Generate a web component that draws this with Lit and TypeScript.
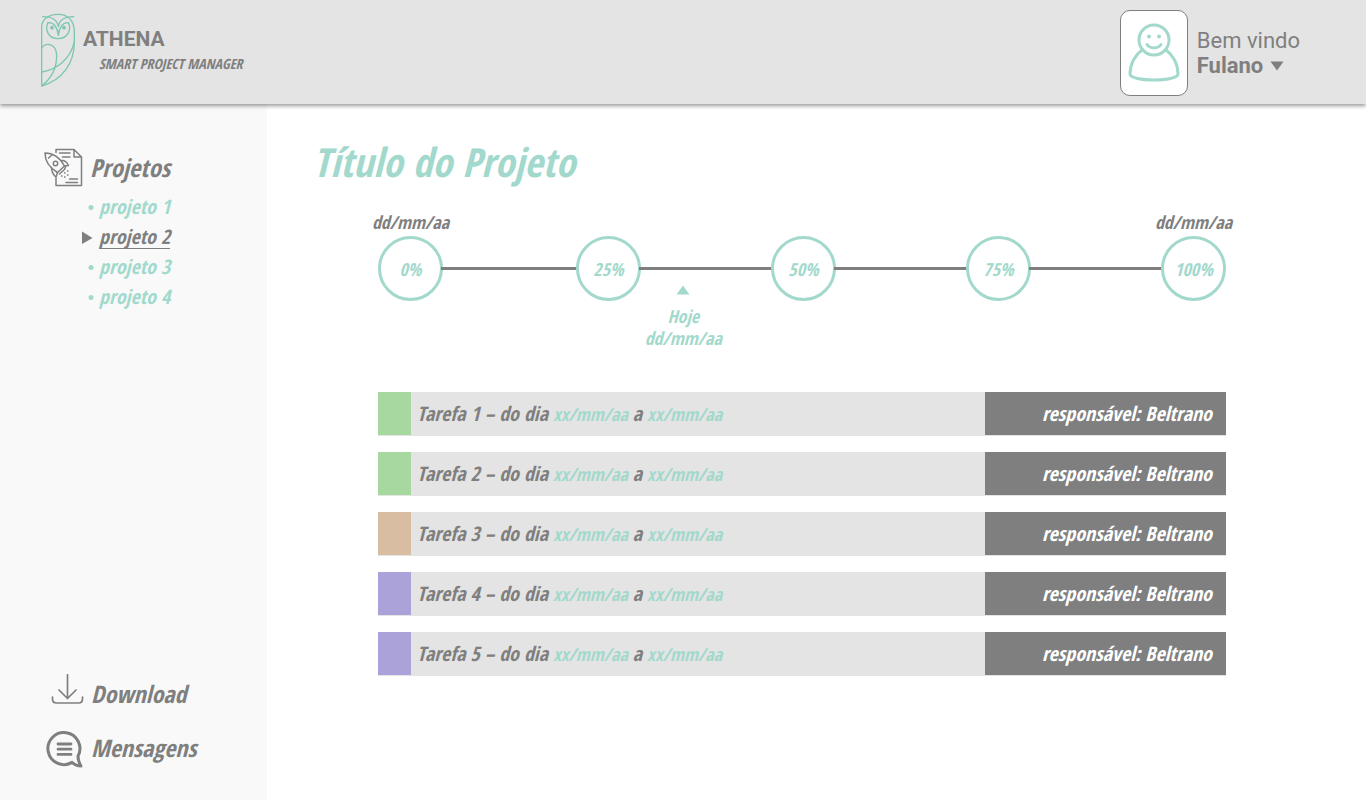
import { LitElement, html, css, svg } from "lit";
import { customElement, property, state } from "lit/decorators.js";
import { classMap } from "lit/directives/class-map.js";
import { styleMap } from "lit/directives/style-map.js";

interface Task {
  id: number;
  tone: string;
  start: string;
  end: string;
  owner: string;
}

const owl = html`<svg class="owl" viewBox="30 39 108 225" aria-hidden="true">
  <g fill="none" stroke="#7cc7b2" stroke-width="4" stroke-linecap="round" stroke-linejoin="round">
    <path d="M35 258V82C35 58 56 43 84 43s49 17 49 52v30C133 190 98 240 35 258z" />
    <path d="M38 50C62 50 82 58 85 80C88 58 108 50 131 50" />
    <path d="M54 68C44 88 54 116 84 116S125 88 115 68" />
    <path d="M54 68C72 66 83 84 85 106C87 84 98 66 115 68" />
    <path d="M35 145C45 126 80 128 80 168C80 205 62 236 37 256" />
    <path d="M36 216C82 208 122 176 133 125" />
  </g>
  <circle cx="66" cy="83" r="5.500" fill="#7cc7b2" />
  <circle cx="102" cy="83" r="5.500" fill="#7cc7b2" />
</svg>`;

const person = html`<svg class="person" viewBox="0 0 52 60" aria-hidden="true">
  <g fill="none" stroke="#a2d9cc" stroke-width="3" stroke-linecap="round" stroke-linejoin="round">
    <circle cx="26" cy="17" r="15" />
    <path d="M14 27C7 32 2 41 2 51c0 4 12 6 24 6s24-2 24-6c0-10-5-19-12-24" />
    <path d="M19 21.500c3 4.500 11 4.500 14 0" />
  </g>
  <circle cx="21" cy="13.500" r="2" fill="#a2d9cc" />
  <circle cx="31" cy="13.500" r="2" fill="#a2d9cc" />
</svg>`;

const rocket = html`<svg class="glyph" viewBox="0 0 40 40" aria-hidden="true">
  <g fill="none" stroke="#7f7f7f" stroke-width="1.500" stroke-linejoin="round" stroke-linecap="round">
    <path d="M12 5.500V2.500H30L37.500 10V38.500H12V31M30 2.500V10H37.500" />
    <path d="M15.500 6H26M18.500 10H26M25.500 32H33.500M22 35.500H33.500" />
    <path d="M1 6C9 6 16 11 20.500 19L13.500 25.500C6 21 1 14 1 6z" />
    <path d="M4.500 11L8.500 7.500M17 13.500C20 13 23 15 24.500 18.500L20.500 19M7.500 20.500C7.500 25 9.500 28 12 30L13.500 25.500" />
    <path d="M21.500 20L20.500 22.500L15.500 27" />
    <circle cx="11.500" cy="16.500" r="2.200" />
  </g>
  <path d="M17 29h1.500M20 26h1.500M23 24h1.500M20 30h1.500M23 28h1.500" stroke="#7f7f7f" stroke-width="1.500" />
</svg>`;

const download = html`<svg class="glyph" viewBox="0 0 40 40" aria-hidden="true">
  <path d="M23.500 0.800V24.500M15 16L23.500 24.500L32 16M8.500 23V25Q8.500 29 12.500 29H34.500Q38.500 29 38.500 25V23"
    fill="none" stroke="#7f7f7f" stroke-width="1.700" stroke-linecap="round" stroke-linejoin="round" />
</svg>`;

const messages = html`<svg class="glyph" viewBox="0 0 40 40" aria-hidden="true">
  <path d="M34 28.200A16 16 0 1 0 28 34.400Q32 38 37 38Q34 33.500 34 28.200z"
    fill="none" stroke="#7f7f7f" stroke-width="3" stroke-linejoin="round" />
  <path d="M14 16H27M14 21.200H27M14 26.400H27" stroke="#7f7f7f" stroke-width="2.800" stroke-linecap="round" />
</svg>`;

@customElement("project-timeline")
export class ProjectTimeline extends LitElement {
  @property({ type: Number }) progress = 0;

  static styles = css`
    :host { display: block; font-size: 18px; }
    .ends { display: flex; justify-content: space-between; margin-bottom: 3px; color: #7f7f7f; }
    .end { display: flex; justify-content: center; width: 65px; white-space: nowrap; }
    .track {
      display: grid;
      grid-template-columns: auto 133fr auto 130fr auto 130fr auto 130fr auto;
      align-items: center;
      color: #a2d9cc;
    }
    .stop {
      box-sizing: border-box;
      display: grid;
      place-items: center;
      width: 65px;
      height: 65px;
      border: 3px solid #a2d9cc;
      border-radius: 50%;
    }
    .line { height: 3px; margin: 0 -2px; background: #7f7f7f; }
    .today { display: flex; flex-direction: column; align-items: center; color: #a2d9cc; margin-top: -16px; }
    .arrow { width: 14px; height: 10px; margin-bottom: 10px; }
  `;

  render() {
    const stops = [0, 25, 50, 75, 100];
    return html`
      <div class="ends"><span class="end">dd/mm/aa</span><span class="end">dd/mm/aa</span></div>
      <div class="track">
        ${stops.map((s, i) => html`${i ? html`<span class="line"></span>` : ""}<span class="stop">${s}%</span>`)}
      </div>
      <div class="today" style=${styleMap({ width: `${this.progress * 2}%` })}>
        <svg class="arrow" viewBox="0 0 14 10" aria-hidden="true"><path d="M7 0.500L13.500 9.500H0.500z" fill="#a2d9cc" /></svg>
        <span>Hoje</span><span>dd/mm/aa</span>
      </div>
    `;
  }
}

@customElement("app-root")
export class AppRoot extends LitElement {
  @state() private current = 2;

  private tasks: Task[] = [
    { id: 1, tone: "green", start: "xx/mm/aa", end: "xx/mm/aa", owner: "Beltrano" },
    { id: 2, tone: "green", start: "xx/mm/aa", end: "xx/mm/aa", owner: "Beltrano" },
    { id: 3, tone: "sand", start: "xx/mm/aa", end: "xx/mm/aa", owner: "Beltrano" },
    { id: 4, tone: "violet", start: "xx/mm/aa", end: "xx/mm/aa", owner: "Beltrano" },
    { id: 5, tone: "violet", start: "xx/mm/aa", end: "xx/mm/aa", owner: "Beltrano" },
  ];

  static styles = css`
    :host {
      display: flex;
      flex-direction: column;
      min-height: 100vh;
      background: #fff;
      color: #7f7f7f;
      font: italic bold 20px/22px "Liberation Sans Narrow", "Open Sans Condensed", "Noto Sans", sans-serif;
    }
    a { color: inherit; text-decoration: none; }
    ul { list-style: none; margin: 0; padding: 0; }
    .top {
      position: relative;
      display: flex;
      justify-content: space-between;
      align-items: center;
      box-sizing: border-box;
      min-height: 104px;
      padding: 2px 66px 0 40px;
      background: #e4e4e4;
      box-shadow: 0 2px 4px rgba(0, 0, 0, 0.4);
    }
    .brand { display: flex; align-items: center; gap: 7px; padding-bottom: 5px; }
    .owl { width: 36px; height: 75px; }
    .name { font: bold 21px/26px Roboto, sans-serif; }
    .tagline { padding-left: 16px; font-size: 14px; line-height: 24px; }
    .user { display: flex; align-items: center; gap: 9px; }
    .avatar {
      box-sizing: border-box;
      display: grid;
      place-items: center;
      width: 68px;
      height: 86px;
      border: 1px solid #7f7f7f;
      border-radius: 10px;
      background: #fff;
    }
    .person { width: 52px; height: 60px; }
    .welcome { font: 22px/25px Roboto, sans-serif; }
    .account {
      display: flex;
      align-items: center;
      gap: 7px;
      padding: 0;
      border: 0;
      background: none;
      color: inherit;
      font: bold 22px/25px Roboto, sans-serif;
    }
    .caret { width: 14px; height: 10px; }
    .body { flex: 1; display: flex; }
    .side {
      box-sizing: border-box;
      flex: none;
      display: flex;
      flex-direction: column;
      justify-content: space-between;
      width: 267px;
      padding: 43px 20px 32px 44px;
      background: #f9f9f9;
    }
    .entry { display: flex; align-items: center; gap: 6px; font-size: 25px; line-height: 40px; }
    .glyph { width: 40px; height: 40px; }
    .projects { padding: 5px 0 0 38px; color: #a2d9cc; }
    .project { display: flex; align-items: center; gap: 5px; min-height: 30px; }
    .mark { width: 12px; height: 14px; }
    .label { border-bottom: 1px solid transparent; }
    .current { color: #7f7f7f; }
    .current .label { border-color: #7f7f7f; }
    .tools { display: flex; flex-direction: column; gap: 14px; }
    .tools .entry { gap: 7px; font-size: 24px; }
    .main { flex: 1; padding: 34px 140px 40px 46px; }
    .title { margin: 0; color: #a2d9cc; font-size: 40px; line-height: 48px; }
    .board { padding: 25px 0 0 65px; }
    .tasks { display: flex; flex-direction: column; gap: 16px; margin-top: 43px; }
    .task { display: flex; line-height: 43px; border-bottom: 1px solid #e4e4e4; background: #e4e4e4; }
    .tone { width: 33px; }
    .green { background: #a6d8a0; }
    .sand { background: #d8bda2; }
    .violet { background: #aaa2d8; }
    .what { flex: 1; padding-left: 6px; }
    .date { color: #a2d9cc; font-size: 18px; line-height: 22px; }
    .owner { box-sizing: border-box; width: 241px; padding-right: 14px; background: #7f7f7f; color: #fff; text-align: right; }
  `;

  private pick(e: Event, n: number) {
    e.preventDefault();
    this.current = n;
  }

  private renderProject(n: number) {
    const on = n === this.current;
    const mark = on ? svg`<path d="M0 1.500L10.500 8L0 14z" fill="#7f7f7f" />` : svg`<circle cx="9" cy="7.500" r="2.500" fill="#a2d9cc" />`;
    return html`<li>
      <a class=${classMap({ project: true, current: on })} href="#" @click=${(e: Event) => this.pick(e, n)}>
        <svg class="mark" viewBox="0 0 12 14" aria-hidden="true">${mark}</svg><span class="label">projeto ${n}</span>
      </a>
    </li>`;
  }

  render() {
    return html`
      <header class="top">
        <div class="brand">
          ${owl}
          <div><div class="name">ATHENA</div><div class="tagline">SMART PROJECT MANAGER</div></div>
        </div>
        <div class="user">
          <div class="avatar">${person}</div>
          <div>
            <div class="welcome">Bem vindo</div>
            <button class="account">Fulano<svg class="caret" viewBox="0 0 14 10" aria-hidden="true"><path d="M0.500 0.500H13.500L7 9.500z" fill="#7f7f7f" /></svg></button>
          </div>
        </div>
      </header>
      <div class="body">
        <nav class="side">
          <div>
            <a class="entry" href="#">${rocket}Projetos</a>
            <ul class="projects">${[1, 2, 3, 4].map((n) => this.renderProject(n))}</ul>
          </div>
          <div class="tools">
            <a class="entry" href="#">${download}Download</a>
            <a class="entry" href="#">${messages}Mensagens</a>
          </div>
        </nav>
        <main class="main">
          <h1 class="title">Título do Projeto</h1>
          <div class="board">
            <project-timeline .progress=${36}></project-timeline>
            <ul class="tasks">
              ${this.tasks.map((t) => html`<li class="task">
                <span class=${classMap({ tone: true, [t.tone]: true })}></span>
                <span class="what">Tarefa ${t.id} – do dia <span class="date">${t.start}</span> a <span class="date">${t.end}</span></span>
                <span class="owner">responsável: ${t.owner}</span>
              </li>`)}
            </ul>
          </div>
        </main>
      </div>
    `;
  }
}
